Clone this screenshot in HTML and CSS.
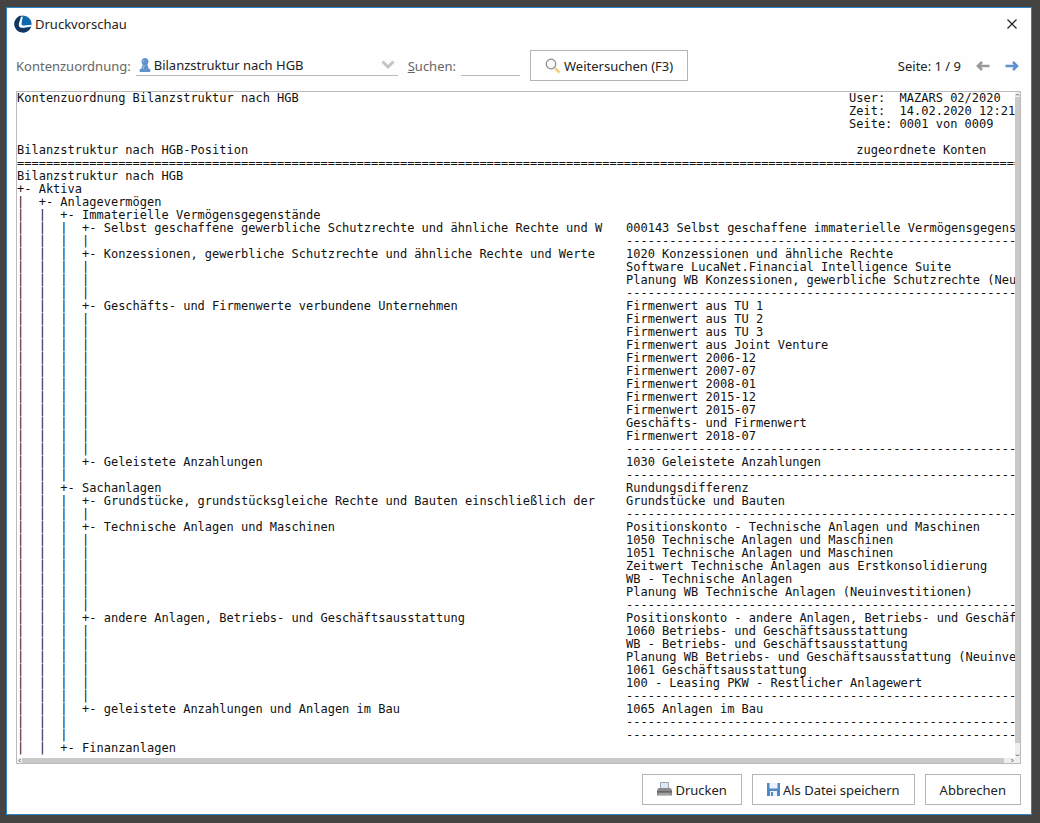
FILE: index.html
```
<!DOCTYPE html>
<html lang="de">
<head>
<meta charset="utf-8">
<title>Druckvorschau</title>
<link rel="stylesheet" href="styles.css">
</head>
<body>
<main class="window">
  <header class="titlebar">
    <svg class="logo" viewBox="0 0 18 18" aria-hidden="true">
      <circle cx="9" cy="9" r="8.6" fill="#0d68ae"/>
      <path d="M7 .6A8.600 8.600 0 1 0 17 12L10 13.200Q4.500 14 5 9Z" fill="#12365f"/>
      <path d="M8.800 1.600L7.600 8Q7.200 10.800 10 10.600L17.600 9.800L17.300 11.600L9.500 12.800Q4 13.400 4.900 8.600L7 1.900Z" fill="#fff"/>
    </svg>
    <h1 class="title">Druckvorschau</h1>
    <button class="icon-button close" type="button" aria-label="Schließen">
      <svg width="10" height="10" viewBox="0 0 10 10"><path d="M.5 .5L9.500 9.500M9.500 .5L.5 9.500" stroke="#222" stroke-width="1.200" fill="none"/></svg>
    </button>
  </header>

  <form class="toolbar">
    <label class="label" for="structure">Kontenzuordnung:</label>
    <div class="combo">
      <svg class="combo-icon" width="12" height="14" viewBox="0 0 12 14" aria-hidden="true"><path d="M6 0a3.600 3.600 0 0 1 2.800 5.800L8.300 6.600 9.800 11H11.300v3H.7v-3h1.500L3.700 6.600 3.200 5.800A3.600 3.600 0 0 1 6 0Z" fill="#5f92cb"/><path d="M5 2L4.500 4M5.200 7L4.200 11" stroke="#a9c6e6" fill="none"/></svg>
      <select id="structure" class="combo-select"><option>Bilanzstruktur nach HGB</option></select>
      <svg class="combo-arrow" width="14" height="10" viewBox="0 0 14 10" aria-hidden="true"><path d="M1.500 1.500L7 7 12.500 1.500" stroke="#c4c4c4" stroke-width="3" fill="none"/></svg>
    </div>
    <label class="label" for="search"><u>S</u>uchen:</label>
    <input id="search" class="search" type="text">
    <button class="button search-button" type="button">
      <svg width="16" height="16" viewBox="0 0 16 16" aria-hidden="true"><circle cx="6" cy="6" r="4.800" fill="#f7f9fb" stroke="#8b8b8b" stroke-width="1.200"/><path d="M9.800 9.800L14.500 14.500" stroke="#f3cf78" stroke-width="2.600"/></svg>
      Weitersuchen (F3)
    </button>
    <nav class="pager" aria-label="Seiten">
      <span>Seite: 1 / 9</span>
      <button class="icon-button" type="button" aria-label="Vorherige Seite">
        <svg width="14" height="10" viewBox="0 0 14 10"><path d="M13.500 5H2.500M6 1L2 5l4 4" stroke="#999" stroke-width="2.600" fill="none"/></svg>
      </button>
      <button class="icon-button next" type="button" aria-label="Nächste Seite">
        <svg width="14" height="10" viewBox="0 0 14 10"><path d="M.5 5H11.500M8 1l4 4-4 4" stroke="#5b8fcd" stroke-width="2.600" fill="none"/></svg>
      </button>
    </nav>
  </form>

  <section class="preview" aria-label="Vorschau">
    <div class="page">
      <div class="page-head">
<pre class="text">Kontenzuordnung Bilanzstruktur nach HGB



Bilanzstruktur nach HGB-Position</pre>
<pre class="text">User:  MAZARS 02/2020
Zeit:  14.02.2020 12:21
Seite: 0001 von 0009

 zugeordnete Konten</pre>
      </div>
<pre class="text">===========================================================================================================================================</pre>
      <div class="page-body">
<pre class="text">Bilanzstruktur nach HGB
+- Aktiva
|  +- Anlagevermögen
|  |  +- Immaterielle Vermögensgegenstände
|  |  |  +- Selbst geschaffene gewerbliche Schutzrechte und ähnliche Rechte und W
|  |  |  |
|  |  |  +- Konzessionen, gewerbliche Schutzrechte und ähnliche Rechte und Werte
|  |  |  |
|  |  |  |
|  |  |  |
|  |  |  +- Geschäfts- und Firmenwerte verbundene Unternehmen
|  |  |  |
|  |  |  |
|  |  |  |
|  |  |  |
|  |  |  |
|  |  |  |
|  |  |  |
|  |  |  |
|  |  |  |
|  |  |  |
|  |  |  |
|  |  |  +- Geleistete Anzahlungen
|  |  |
|  |  +- Sachanlagen
|  |  |  +- Grundstücke, grundstücksgleiche Rechte und Bauten einschließlich der
|  |  |  |
|  |  |  +- Technische Anlagen und Maschinen
|  |  |  |
|  |  |  |
|  |  |  |
|  |  |  |
|  |  |  |
|  |  |  |
|  |  |  +- andere Anlagen, Betriebs- und Geschäftsausstattung
|  |  |  |
|  |  |  |
|  |  |  |
|  |  |  |
|  |  |  |
|  |  |  |
|  |  |  +- geleistete Anzahlungen und Anlagen im Bau
|  |  |
|  |  |
|  |  +- Finanzanlagen</pre>
<pre class="text">




000143 Selbst geschaffene immaterielle Vermögensgegenstände
------------------------------------------------------
1020 Konzessionen und ähnliche Rechte
Software LucaNet.Financial Intelligence Suite
Planung WB Konzessionen, gewerbliche Schutzrechte (Neuinvestitionen)
------------------------------------------------------
Firmenwert aus TU 1
Firmenwert aus TU 2
Firmenwert aus TU 3
Firmenwert aus Joint Venture
Firmenwert 2006-12
Firmenwert 2007-07
Firmenwert 2008-01
Firmenwert 2015-12
Firmenwert 2015-07
Geschäfts- und Firmenwert
Firmenwert 2018-07
------------------------------------------------------
1030 Geleistete Anzahlungen
------------------------------------------------------
Rundungsdifferenz
Grundstücke und Bauten
------------------------------------------------------
Positionskonto - Technische Anlagen und Maschinen
1050 Technische Anlagen und Maschinen
1051 Technische Anlagen und Maschinen
Zeitwert Technische Anlagen aus Erstkonsolidierung
WB - Technische Anlagen
Planung WB Technische Anlagen (Neuinvestitionen)
------------------------------------------------------
Positionskonto - andere Anlagen, Betriebs- und Geschäftsausstattung
1060 Betriebs- und Geschäftsausstattung
WB - Betriebs- und Geschäftsausstattung
Planung WB Betriebs- und Geschäftsausstattung (Neuinvestitionen)
1061 Geschäftsausstattung
100 - Leasing PKW - Restlicher Anlagewert
------------------------------------------------------
1065 Anlagen im Bau
------------------------------------------------------
------------------------------------------------------
</pre>
      </div>
    </div>
    <div class="scroll scroll-y" aria-hidden="true">
      <svg width="5" height="5" viewBox="0 0 5 5"><path d="M1 3.500L2.500 2 4 3.500" stroke="#555" fill="none"/></svg>
      <div class="thumb-y"></div>
      <svg width="5" height="5" viewBox="0 0 5 5"><path d="M1 1.500L2.500 3 4 1.500" stroke="#555" fill="none"/></svg>
    </div>
    <div class="scroll scroll-x" aria-hidden="true">
      <svg width="5" height="5" viewBox="0 0 5 5"><path d="M3.500 1L2 2.500 3.500 4" stroke="#555" fill="none"/></svg>
      <div class="thumb-x"></div>
      <svg width="5" height="5" viewBox="0 0 5 5"><path d="M1.500 1L3 2.500 1.500 4" stroke="#555" fill="none"/></svg>
    </div>
  </section>

  <footer class="actions">
    <button class="button" type="button">
      <svg width="15" height="15" viewBox="0 0 15 15" aria-hidden="true"><path d="M3.500 7V.5h8V7" fill="#dfe9f4" stroke="#9aa4b0"/><path d="M1.500 6h12l1.500 2v5.500H0V8Z" fill="#8a8a8a"/><path d="M0 9h15v1.500H0Z" fill="#666"/><path d="M2 11.500h11v1H2Z" fill="#bbb"/></svg>
      Drucken
    </button>
    <button class="button" type="button">
      <svg width="13" height="13" viewBox="0 0 13 13" aria-hidden="true"><path d="M0 0h13v13H0Z" fill="#5088c6"/><path d="M2.500 0h8v5.500h-8ZM3 8h7v5H3Z" fill="#eef3f9"/><path d="M4 9h2v4H4Z" fill="#5088c6"/></svg>
      Als Datei speichern
    </button>
    <button class="button" type="button">Abbrechen</button>
  </footer>
</main>
</body>
</html>
```
FILE: styles.css
```
* { box-sizing: border-box; }

body {
  margin: 0;
  min-height: 100vh;
  display: flex;
  padding: 7px 8px 8px 6px;
  background: #454443;
  color: #222;
  font: 13px/18px "Noto Sans", "Open Sans", sans-serif;
}

button, input, select {
  font: inherit;
  color: inherit;
}

svg { flex: none; }

.window {
  flex: 1;
  min-width: 0;
  display: flex;
  flex-direction: column;
  padding: 0 10px 0 9px;
  border: 1px solid #2e83c4;
  background: #fefefe;
}

.titlebar {
  display: flex;
  align-items: center;
  gap: 3px;
  height: 32px;
  padding-right: 4px;
}

.logo {
  width: 18px;
  height: 18px;
  margin-left: -2px;
}

.title {
  margin: 0;
  font-size: 13px;
  font-weight: 400;
}

.icon-button {
  display: flex;
  padding: 0;
  border: 0;
  background: none;
}

.close { margin-left: auto; }

.toolbar {
  display: flex;
  align-items: center;
  height: 51px;
}

.label { color: #666; }

.combo {
  display: flex;
  align-items: center;
  width: 262px;
  height: 20px;
  margin: 0 10px 0 5px;
  padding: 0 3px;
  border-bottom: 1px solid #bbb;
}

.combo-select {
  flex: 1;
  min-width: 0;
  padding: 0 3px;
  border: 0;
  background: none;
  appearance: none;
}

.search {
  width: 59px;
  height: 20px;
  margin: 0 10px 0 5px;
  padding: 0;
  border: 0;
  border-bottom: 1px solid #bbb;
  background: none;
}

.button {
  display: flex;
  align-items: center;
  justify-content: center;
  gap: 3px;
  height: 31px;
  padding: 0 14px;
  border: 1px solid #b5b5b5;
  background: #fff;
  white-space: nowrap;
}

.pager {
  display: flex;
  align-items: center;
  gap: 15px;
  margin-left: auto;
  padding-right: 2px;
}

.preview {
  flex: 1;
  min-height: 0;
  display: grid;
  grid-template: minmax(0, 1fr) 5px / minmax(0, 1fr) 5px;
  border: 1px solid #bbb;
}

.page {
  overflow: hidden;
  background: #fff;
}

.page-head {
  display: grid;
  grid-template-columns: 832px max-content;
}

.page-body {
  display: grid;
  grid-template-columns: 609px max-content;
}

.text {
  margin: 0;
  color: #111;
  font: 12px/13px "DejaVu Sans Mono", monospace;
}

.scroll {
  display: flex;
  background: #eee;
}

.scroll-y { flex-direction: column; }

.scroll-x {
  grid-column: 1 / -1;
  padding-right: 5px;
}

.thumb-y {
  flex: 1;
  margin-bottom: 10px;
  background: #c9c9c9;
}

.thumb-x {
  flex: 1;
  margin-right: 6px;
  background: #c9c9c9;
}

.actions {
  display: flex;
  justify-content: flex-end;
  gap: 10px;
  padding: 10px 0 9px;
}
```
